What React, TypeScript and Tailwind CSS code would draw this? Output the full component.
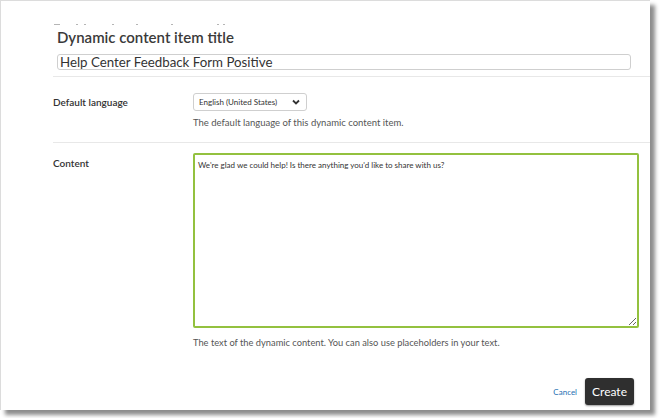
import { ChangeEvent, useState } from "react";

// bottom edges of the heading scrolled out above the panel
const fragments = [
  { left: 0, width: 6 },
  { left: 22, width: 2 },
  { left: 30, width: 2 },
  { left: 58, width: 2 },
  { left: 82, width: 2 },
  { left: 117, width: 2 },
  { left: 163, width: 2 },
  { left: 169, width: 2 },
];

export default function App() {
  const [title, setTitle] = useState("Help Center Feedback Form Positive");
  const [content, setContent] = useState(
    "We're glad we could help! Is there anything you'd like to share with us?"
  );

  return (
    <div className="w-[661px] h-[418px] bg-white font-['Lato',sans-serif] text-[#333]">
      <div className="w-[650px] h-[410px] bg-white border-t border-l border-[#dcdcdc] shadow-[5px_5px_4px_rgba(0,0,0,0.45)]">
        <div className="h-[23px]" />
        <div className="h-[2px] pl-[53px] flex">
          {fragments.map((f, i) => (
            <span
              key={i}
              className="h-[1px] bg-[#b5b5b5]"
              style={{ marginLeft: i === 0 ? 0 : f.left - fragments[i - 1].left - fragments[i - 1].width, width: f.width }}
            />
          ))}
        </div>

        <div className="pl-[56px] pr-[19px]">
          <h2 className="mt-[1px] text-[15px] leading-[20px] font-semibold text-[#3a3a3a]">
            Dynamic content item title
          </h2>
          <input
            value={title}
            onChange={(e: ChangeEvent<HTMLInputElement>) => setTitle(e.target.value)}
            className="block mt-[7px] w-full h-[16px] px-[2px] border border-[#cfcfcf] rounded-[3px] text-[13.3px] leading-[14px] text-[#333] outline-none"
          />
        </div>

        <div className="mt-[6px] ml-[52px] border-t border-[#e8e8e8]" />

        <div className="flex pl-[52px] pt-[16px] pb-[13px]">
          <div className="w-[140px] h-[18px] flex items-center text-[10px] font-semibold text-[#333]">
            Default language
          </div>
          <div className="flex flex-col">
            <div className="w-[114px] h-[18px] border border-[#cfcfcf] rounded-[3px] flex items-center justify-between pl-[5px] pr-[6px]">
              <span className="text-[8px] leading-[10px] text-[#333]">English (United States)</span>
              <svg width="8" height="6" viewBox="0 0 8 6">
                <path d="M1 1.5 L4 4.5 L7 1.5" fill="none" stroke="#333" strokeWidth="1.8" />
              </svg>
            </div>
            <p className="mt-[6px] text-[9.5px] leading-[12px] text-[#555]">
              The default language of this dynamic content item.
            </p>
          </div>
        </div>

        <div className="ml-[52px] border-t border-[#e8e8e8]" />

        <div className="flex pl-[52px] pt-[10px] pr-[11px]">
          <div className="w-[140px] pt-[4px] text-[10px] leading-[12px] font-semibold text-[#333]">
            Content
          </div>
          <div className="flex-1 flex flex-col">
            <textarea
              value={content}
              onChange={(e: ChangeEvent<HTMLTextAreaElement>) => setContent(e.target.value)}
              className="block w-full h-[175px] border-2 border-[#93c13f] rounded-[2px] px-[3px] py-[5px] text-[8px] leading-[10px] text-[#333] outline-none resize"
            />
            <p className="mt-[9px] text-[9.3px] leading-[12px] text-[#555]">
              The text of the dynamic content. You can also use placeholders in your text.
            </p>
          </div>
        </div>

        <div className="mt-[29px] flex items-center justify-end gap-[8px] pr-[16px]">
          <button className="text-[8px] text-[#1f6fb2]">Cancel</button>
          <button className="w-[49px] h-[27px] rounded-[3px] bg-[#2f2f2f] text-white text-[12px] shadow-[0_1px_2px_rgba(0,0,0,0.4)]">
            Create
          </button>
        </div>
      </div>
    </div>
  );
}
